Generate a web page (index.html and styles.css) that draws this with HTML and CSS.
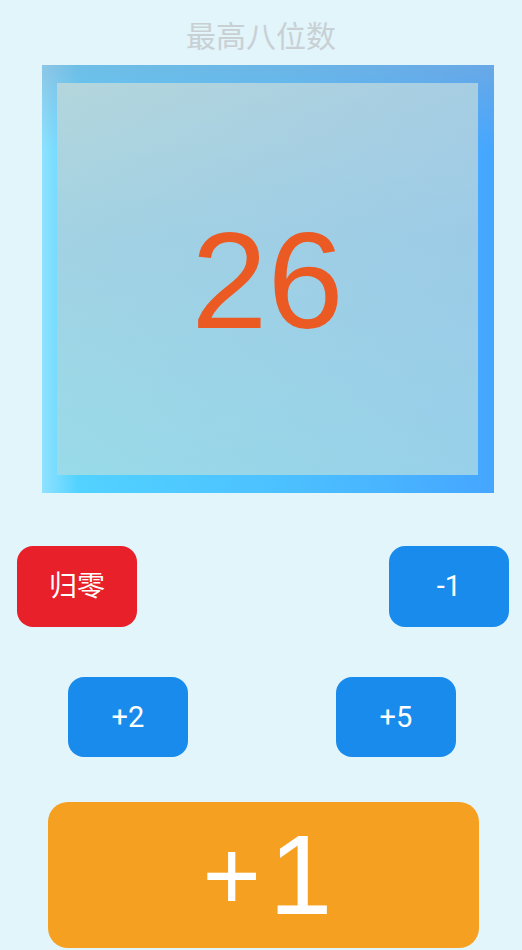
FILE: index.html
```html
<!DOCTYPE html>
<html lang="zh-CN">
  <head>
    <meta charset="UTF-8" />
    <meta name="viewport" content="width=device-width, initial-scale=1.0" />
    <title>计数器</title>
    <link rel="stylesheet" href="styles.css">
  </head>
  <body>
    <div id="wrap">
      <h1 class="title">最高八位数</h1>

      <div class="screen">
        <div class="inner">
          <span class="num">26</span>
        </div>
      </div>

      <div class="row row1">
        <a href="javascript:;" class="btn red">归零</a>
        <a href="javascript:;" class="btn">-1</a>
      </div>

      <div class="row row2">
        <a href="javascript:;" class="btn">+2</a>
        <a href="javascript:;" class="btn">+5</a>
      </div>

      <a href="javascript:;" class="big"><span class="plus">+</span>1</a>
    </div>
  </body>
</html>
```

FILE: styles.css
```css
* {
  margin: 0;
  padding: 0;
  box-sizing: border-box;
}

body {
  background-color: #e1f5fb;
  font-family: Roboto, "Noto Sans CJK SC", sans-serif;
}

#wrap {
  width: 522px;
  height: 950px;
  overflow: hidden;
}

.title {
  padding-top: 14px;
  height: 54px;
  line-height: 40px;
  text-align: center;
  font-size: 30px;
  font-weight: normal;
  color: #c9d0d4;
  font-family: "Noto Sans CJK SC", sans-serif;
}

.screen {
  width: 452px;
  height: 428px;
  margin: 11px 0 0 42px;
  padding: 18px 16px 18px 15px;
  background:
    linear-gradient(to bottom, rgba(140, 170, 205, 0.5), rgba(140, 170, 205, 0) 20%),
    linear-gradient(to right, #8fe2ff, #52d2ff 8%, #4cc0ff 55%, #45a6ff);
}

.screen .inner {
  display: flex;
  justify-content: center;
  align-items: center;
  width: 100%;
  height: 100%;
  background:
    linear-gradient(to right, rgba(155, 215, 230, 0), rgba(150, 195, 235, 0.45)),
    linear-gradient(to bottom, #b4d6dc, #a2d2e3 40%, #99dbe8);
}

.num {
  font-family: "Liberation Sans", Arial, sans-serif;
  font-size: 137px;
  color: #ec5a24;
  line-height: 1;
  margin-top: 2px;
}

.row {
  display: flex;
  justify-content: space-between;
}

.row1 {
  margin-top: 53px;
  padding: 0 13px 0 17px;
}

.row2 {
  margin-top: 50px;
  padding: 0 66px 0 68px;
}

.btn {
  display: block;
  width: 120px;
  height: 81px;
  border-radius: 16px;
  background-color: #198bec;
  color: #fff;
  font-size: 29px;
  line-height: 81px;
  text-align: center;
  text-decoration: none;
  user-select: none;
}

.row2 .btn {
  height: 80px;
  line-height: 80px;
}

.btn.red {
  background-color: #e8202a;
  font-size: 28px;
}

.big {
  display: block;
  width: 431px;
  height: 146px;
  margin: 45px 0 0 48px;
  padding-left: 8px;
  border-radius: 20px;
  background-color: #f5a020;
  color: #fff;
  font-family: "Liberation Sans", Arial, sans-serif;
  font-size: 114px;
  line-height: 146px;
  text-align: center;
  text-decoration: none;
  user-select: none;
}

.big .plus {
  font-size: 100px;
  margin-right: 8px;
  vertical-align: 4px;
}
```
